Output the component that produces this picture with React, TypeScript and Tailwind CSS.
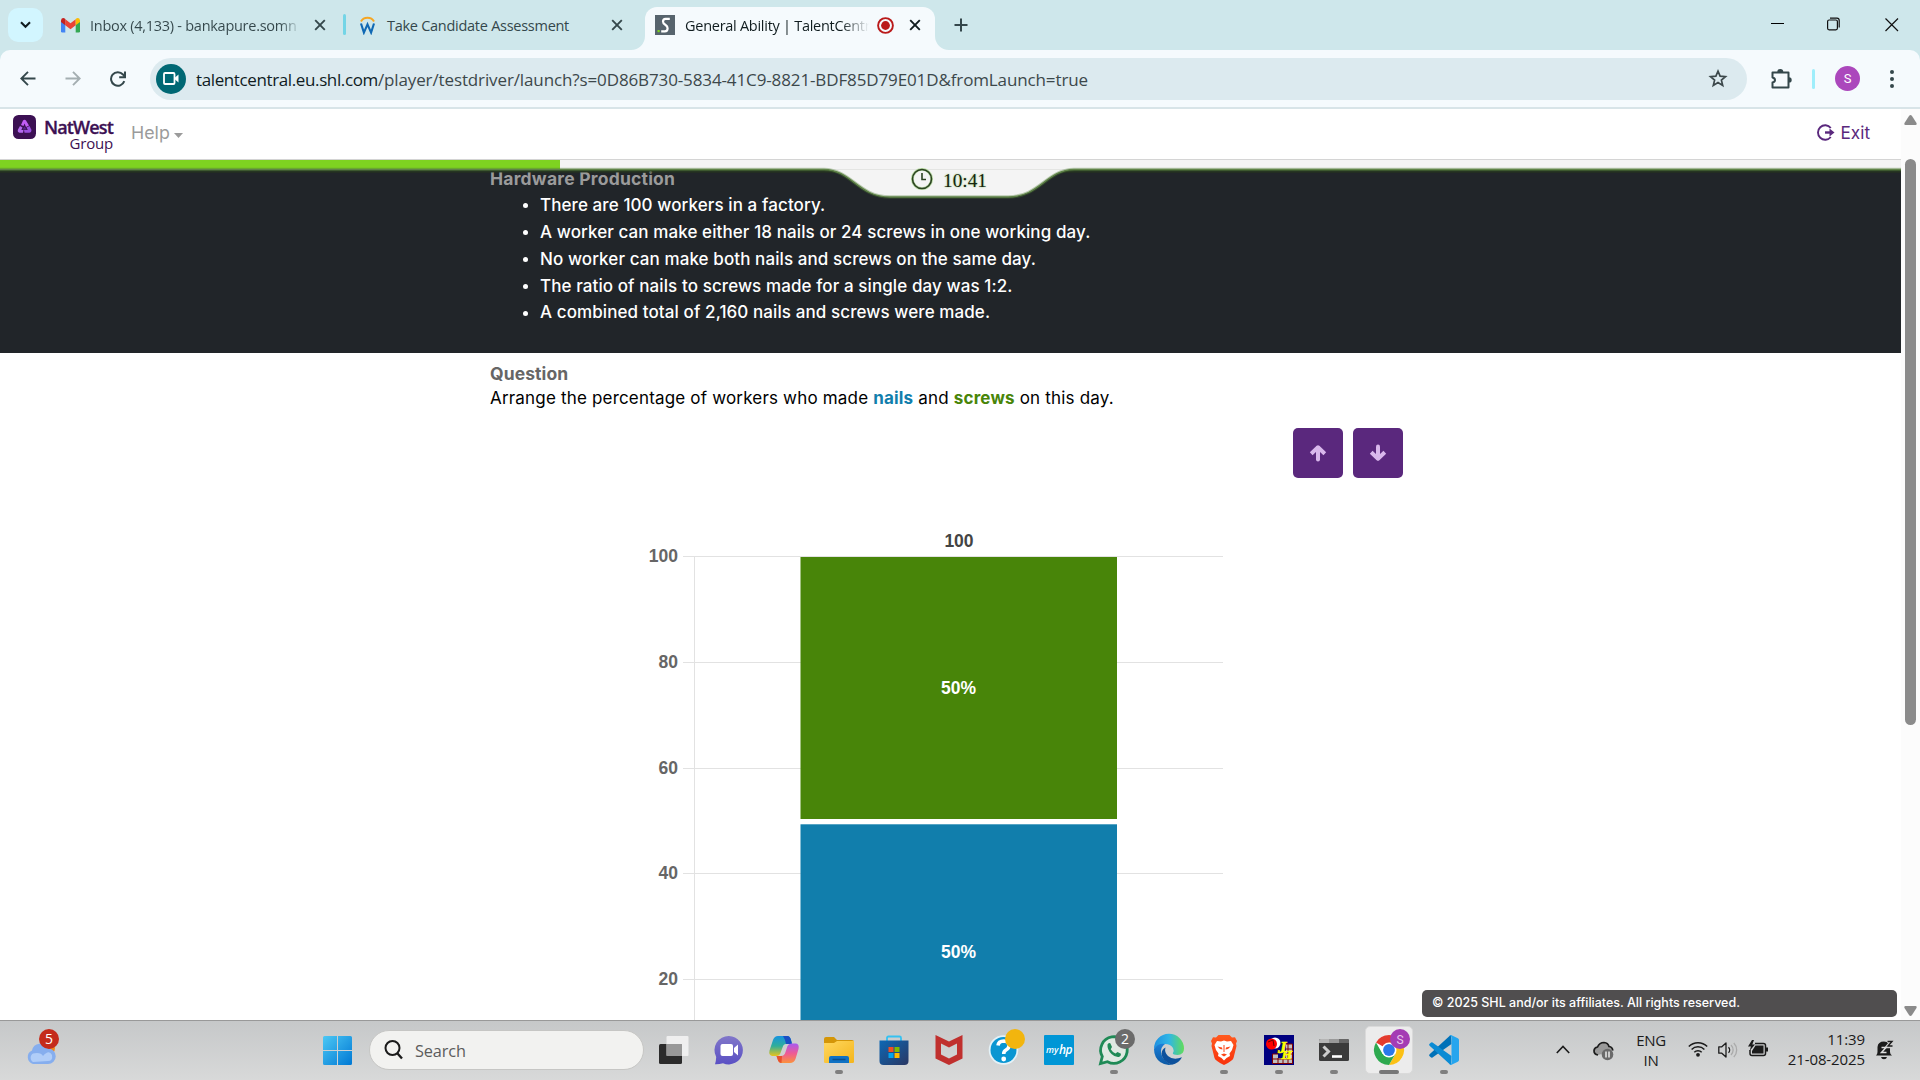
import type { ReactNode } from "react";

const FACTS = [
  "There are 100 workers in a factory.",
  "A worker can make either 18 nails or 24 screws in one working day.",
  "No worker can make both nails and screws on the same day.",
  "The ratio of nails to screws made for a single day was 1:2.",
  "A combined total of 2,160 nails and screws were made.",
];

const CloseX = ({ color = "#34474b" }: { color?: string }) => (
  <svg width="12" height="12" viewBox="0 0 12 12" stroke={color} strokeWidth="1.9">
    <path d="M1.2 1.2 10.8 10.8M10.8 1.2 1.2 10.8" />
  </svg>
);

function Gmail() {
  return (
    <svg width="19" height="15" viewBox="0 0 19 15">
      <path d="M0 2.5V13.3Q0 14.6 1.3 14.6H4.3V6.6L2 3Z" fill="#4285f4" />
      <path d="M19 2.5V13.3Q19 14.6 17.7 14.6H14.7V6.6L17 3Z" fill="#34a853" />
      <path d="M4.3 1.2 9.5 5.2 14.7 1.2V7.3L9.5 11.2 4.3 7.3Z" fill="#ea4335" />
      <path d="M0 2.2Q.4 0 2.2 0 3.3 0 4.3 1V7.3L0 4.1Z" fill="#c5221f" />
      <path d="M19 2.2Q18.600 0 16.800 0 15.700 0 14.700 1V7.300L19 4.100Z" fill="#fbbc04" />
    </svg>
  );
}

function Tabs() {
  return (
    <div className="flex h-[50px] bg-[#cee7eb] font-['Open_Sans',sans-serif] text-[14.5px] tracking-[-0.27px] text-[#34474b]">
      <div className="mt-2 ml-2 flex h-[34px] w-[35px] items-center justify-center rounded-[10px] bg-[#d2f6ff]">
        <svg width="11" height="8" viewBox="0 0 11 8" fill="none" stroke="#101c1f" strokeWidth="2.1"><path d="M1 1.300 5.500 5.800 10 1.300" /></svg>
      </div>
      <div className="flex w-[300px] items-center pl-[18px]">
        <Gmail />
        <span className="mt-[2px] ml-[10px] w-[211px] overflow-hidden whitespace-nowrap bg-linear-to-r from-[#34474b] from-90% to-transparent bg-clip-text text-transparent">Inbox (4,133) - bankapure.somn</span>
        <span className="ml-[13px]"><CloseX /></span>
      </div>
      <div className="mt-[14px] h-[21px] w-[3px] rounded bg-[#74d5e6]" />
      <div className="flex w-[299px] items-center pl-[13px]">
        <svg width="17" height="20" viewBox="0 0 17 20" fill="none">
          <path d="M2 6.500A7.200 6.500 0 0 1 15 6.500" stroke="#f6a623" strokeWidth="2" />
          <path d="M2 8.500 4.900 17.600 8.500 9.400 12.100 17.600 15 8.500" stroke="#1069b4" strokeWidth="2.100" />
        </svg>
        <span className="mt-[2px] ml-[11px] w-[224px] whitespace-nowrap">Take Candidate Assessment</span>
        <CloseX />
      </div>
      <div className="relative mt-[7px] flex w-[290px] items-center rounded-t-[12px] bg-[#f5fafd] pb-[7px] pl-[10px] text-[#101c1f]">
        <svg className="absolute bottom-0 -left-[14px]" width="14" height="14"><path d="M14 0V14H0A14 14 0 0 0 14 0Z" fill="#f5fafd" /></svg>
        <svg className="absolute bottom-0 -right-[14px]" width="14" height="14"><path d="M0 0V14H14A14 14 0 0 1 0 0Z" fill="#f5fafd" /></svg>
        <svg width="20" height="20" viewBox="0 0 20 20">
          <rect width="20" height="20" fill="#57646d" />
          <path d="M14.800 3.800H10.500Q8 3.800 8 6.400 8 8.400 10.300 9.800 12.600 11.200 12.600 13.200 12.600 16.300 9.800 16.300H6.200" fill="none" stroke="#fff" strokeWidth="2.200" />
          <rect x="2.500" y="15" width="2.200" height="2.200" fill="#7ed321" />
        </svg>
        <span className="mt-[2px] ml-[10px] w-[184px] overflow-hidden whitespace-nowrap bg-linear-to-r from-[#101c1f] from-85% to-transparent bg-clip-text text-transparent">General Ability | TalentCentr</span>
        <svg className="ml-[8px]" width="17" height="17" viewBox="0 0 17 17"><circle cx="8.500" cy="8.500" r="7.400" fill="none" stroke="#ba1a1a" strokeWidth="1.900" /><circle cx="8.500" cy="8.500" r="4.400" fill="#ba1a1a" /></svg>
        <span className="ml-[15px]"><CloseX color="#101c1f" /></span>
      </div>
      <svg className="mt-[18px] ml-[19px]" width="14" height="14" stroke="#34474b" strokeWidth="2"><path d="M7 .500V13.500M.500 7H13.500" /></svg>
      <div className="ml-auto flex pt-[17px] pr-[21px]">
        <svg width="13" height="14" stroke="#000" strokeWidth="1"><path d="M0 6.500H13" /></svg>
        <svg className="ml-[43px]" width="13" height="14" fill="none" stroke="#111" strokeWidth="1.200"><rect x=".600" y="3" width="9.800" height="9.800" rx="1.500" /><path d="M3 1.200H10Q12.200 1.200 12.200 3.500V10.500" /></svg>
        <svg className="ml-[45px]" width="14" height="15" stroke="#111" strokeWidth="1.200"><path d="M.500 1.500 13 14M13 1.500 .500 14" /></svg>
      </div>
    </div>
  );
}

function Toolbar() {
  return (
    <div className="bg-[#cee7eb]">
      <div className="flex h-[59px] items-center rounded-t-[10px] border-b-2 border-[#d8e4e8] bg-[#f5fafd] pl-5">
        <svg width="16" height="15" viewBox="0 0 16 15" fill="none" stroke="#34474b" strokeWidth="1.900"><path d="M15.500 7.500H1.500M8 .800 1.300 7.500 8 14.200" /></svg>
        <svg className="ml-[29px]" width="16" height="15" viewBox="0 0 16 15" fill="none" stroke="#a4aeb1" strokeWidth="1.900"><path d="M.500 7.500H14.500M8 .800 14.700 7.500 8 14.200" /></svg>
        <svg className="ml-[29px]" width="16" height="16" viewBox="0 0 16 16" fill="none" stroke="#34474b" strokeWidth="2"><path d="M14.300 10.200A6.800 6.800 0 1 1 13 3.500L14.800 5.800" /><path d="M15 .500V6.300H9.200" /></svg>
        <div className="ml-[24px] flex h-[42px] w-[1597px] items-center rounded-full bg-[#dceaef] pl-[6px]">
          <div className="flex size-[30px] items-center justify-center rounded-full bg-[#006874]">
            <svg width="16" height="13" viewBox="0 0 16 13"><rect x="1" y="1" width="10.500" height="11" rx="1" fill="none" stroke="#fff" strokeWidth="1.800" /><path d="M12 5.500 15.500 2.500V10.500L12 7.500Z" fill="#fff" /></svg>
          </div>
          <p className="mt-[2px] ml-[10px] whitespace-nowrap font-['Open_Sans',sans-serif] text-[17px] text-[#3c484b]">
            <span className="tracking-[-0.38px] text-[#101c1f]">talentcentral.eu.shl.com</span>
            <span className="tracking-[-0.12px]">/player/testdriver/launch?s=0D86B730-5834-41C9-8821-BDF85D79E01D&amp;fromLaunch=true</span>
          </p>
          <svg className="mr-[19px] ml-auto" width="20" height="19" viewBox="0 0 20 19" fill="none" stroke="#3c484b" strokeWidth="1.700"><path d="M10 2.200 12.100 7.100 17.500 7.600 13.400 11.100 14.700 16.400 10 13.600 5.300 16.400 6.600 11.100 2.500 7.600 7.900 7.100Z" /></svg>
        </div>
        <svg className="ml-[24px]" width="21" height="20" viewBox="0 0 21 20"><path d="M1.500 3.500H17.500V18.500H1.500V13.500Q4 12.800 4 11 4 9.200 1.500 8.500Z" fill="none" stroke="#34474b" strokeWidth="2" strokeLinejoin="round" /><path d="M6.300 3A3 3 0 0 1 12.300 3ZM18 8.200A2.700 2.700 0 0 1 18 13.600Z" fill="#34474b" /></svg>
        <div className="ml-[20px] h-5 w-[3px] rounded bg-[#9feefb]" />
        <div className="ml-[20px] flex size-[25px] items-center justify-center rounded-full bg-[#ab47bc] font-[Roboto] text-[13px] text-white">S</div>
        <svg className="ml-[30px]" width="4" height="18" fill="#34474b"><circle cx="2" cy="2" r="2" /><circle cx="2" cy="9" r="2" /><circle cx="2" cy="16" r="2" /></svg>
      </div>
    </div>
  );
}

function SiteHeader() {
  return (
    <div className="flex h-[50px] shrink-0 bg-white pl-[13px]">
      <svg className="mt-[6px]" width="23" height="24" viewBox="0 0 23 24">
        <rect width="23" height="24" rx="5.500" fill="#3c1053" />
        <g strokeLinejoin="round" strokeWidth="1">
          <path d="M8 10 10 5.500Q11.500 4 13 5.500L16 10.500 13 12 11.500 8.500 10.500 11Z" fill="#c15cf5" />
          <path d="M16.500 11 18.500 15Q18.500 17.500 16.500 17.800H11.500L11 15H14.800L13.500 12.500Z" fill="#9a4fe0" />
          <path d="M10 17.800H6.500Q4 17 5 14.500L7 11 9.500 12.500 8.300 15H10.500Z" fill="#b56af0" />
          <path d="M11.500 11.500 13.300 14.500H9.700Z" fill="#5a2390" />
        </g>
      </svg>
      <div className="ml-[7px] flex w-[70px] flex-col items-end whitespace-nowrap font-['Open_Sans',sans-serif] text-[#3c1053]">
        <span className="mt-[8px] text-[18px] leading-[20px] font-semibold tracking-[-0.85px] [-webkit-text-stroke:0.3px_#3c1053]">NatWest</span>
        <span className="text-[15px] leading-[13px] font-medium tracking-[-0.2px]">Group</span>
      </div>
      <div className="ml-[18px] flex items-center pb-[2px] font-['Inter',sans-serif] text-[17.8px] text-[#9b9b9b]">
        Help
        <svg className="mt-1 ml-[4px]" width="9" height="5"><path d="M0 0H9L4.500 5Z" fill="#9b9b9b" /></svg>
      </div>
      <div className="mr-[31px] ml-auto flex items-center pb-[2px] font-['Inter',sans-serif] text-[17.2px] text-[#5a287d]">
        <svg className="mr-[6px] -mt-[1px]" width="18" height="17" viewBox="0 0 18 17" fill="none" stroke="#5a287d" strokeWidth="1.900"><path d="M13.800 4A7.200 7.200 0 1 0 13.800 13" /><path d="M8 8.500H14" strokeWidth="2.400" /><path d="M12.500 4.500 17.500 8.500 12.500 12.500Z" fill="#5a287d" stroke="none" /></svg>
        Exit
      </div>
    </div>
  );
}

function TimerBar() {
  return (
    <div className="relative h-[11px] shrink-0 border-t border-[#d4d4d4] bg-[#f4f4f4]">
      <div className="h-[10px] w-[560px] bg-[#7ed321]" />
      <svg className="absolute top-[7px] left-0" width="1901" height="36" viewBox="0 0 1901 36" fill="none">
        <path d="M0 4.200H1901" stroke="#26391c" strokeWidth="3" opacity=".6" />
        <path d="M824 2.500C852 3 858 30 890 30H1008C1040 30 1046 3 1074 2.500Z" fill="#f4f4f4" />
        <path d="M0 2.500H824C852 3 858 30 890 30H1008C1040 30 1046 3 1074 2.500H1901" stroke="#4d7a34" strokeWidth="3.500" opacity=".35" />
        <path d="M0 2.500H824C852 3 858 30 890 30H1008C1040 30 1046 3 1074 2.500H1901" stroke="#5f8348" strokeWidth="1.300" />
      </svg>
      <div className="absolute top-[6px] left-[911px] flex items-center">
        <svg width="22" height="22" viewBox="0 0 22 22" fill="none" stroke="#2c4322"><circle cx="11" cy="11" r="9.600" strokeWidth="2.800" stroke="#b9dba4" /><circle cx="11" cy="11" r="9.500" strokeWidth="1.600" /><path d="M11 5V11.500H15" strokeWidth="1.600" /></svg>
        <span className="mt-[4px] ml-[10px] font-['Liberation_Serif',serif] text-[19.300px] leading-[22px] text-[#16240f] [text-shadow:0_0_2px_#8cc46a]">10:41</span>
      </div>
    </div>
  );
}

function Chart() {
  const ticks: [number, number][] = [[100, 46.5], [80, 152.5], [60, 258.5], [40, 363.5], [20, 469.5]];
  return (
    <svg className="ml-[640px] block" width="600" height="510" viewBox="0 0 600 510" fontFamily="Liberation Sans, sans-serif" fontWeight="700" fontSize="17.5">
      <g stroke="#e2e2e2">
        {ticks.map(([v, y]) => <path key={v} d={`M43 ${y}H583`} />)}
        <path d="M54.500 46.500V510" />
      </g>
      {ticks.map(([v, y]) => <text key={v} x="38" y={y + 5} textAnchor="end" fill="#666">{v}</text>)}
      <rect x="160.500" y="47" width="316.500" height="262" fill="#488509" />
      <rect x="160.500" y="314.300" width="316.500" height="200" fill="#117eac" />
      <text x="319" y="37" textAnchor="middle" fill="#444">100</text>
      <text x="318.500" y="184" textAnchor="middle" fill="#fff">50%</text>
      <text x="318.500" y="448" textAnchor="middle" fill="#fff">50%</text>
    </svg>
  );
}

const MoveButton = ({ down = false }: { down?: boolean }) => (
  <button className="flex size-[50px] items-center justify-center rounded-[5px] bg-[#5a287d]">
    <svg className={down ? "rotate-180" : ""} width="18" height="18" viewBox="0 0 18 18" fill="none" stroke="#d9b8ec" strokeWidth="4"><path d="M9 15.500V4" strokeLinecap="round" /><path d="M2.200 9.700 9 3.300 15.800 9.700" strokeLinejoin="round" /></svg>
  </button>
);

function Page() {
  return (
    <div className="flex h-[911px] bg-white">
      <div className="flex w-[1901px] flex-col">
        <SiteHeader />
        <TimerBar />
        <div className="h-[183px] shrink-0 bg-[#212529] pl-[490px] font-['Inter',sans-serif] text-[17px]">
          <h2 className="text-[17.5px] leading-[18px] font-bold tracking-[0.22px] text-[#9b9b9b]">Hardware Production</h2>
          <ul className="mt-[4.500px] font-medium tracking-[0.09px] text-white">
            {FACTS.map((f) => (
              <li key={f} className="flex h-[26.800px] items-center pl-[33px]">
                <span className="mr-[12px] size-[5px] rounded-full bg-white" />
                {f}
              </li>
            ))}
          </ul>
        </div>
        <div className="flex h-[75px] shrink-0 flex-col pl-[490px] font-['Inter',sans-serif] text-[17px] text-black">
          <h2 className="mt-[9px] text-[17.5px] leading-[24px] font-bold tracking-[0.1px] text-[#666]">Question</h2>
          <p className="leading-[24px] tracking-[0.18px]">
            Arrange the percentage of workers who made <b className="text-[#117eac]">nails</b> and <b className="text-[#488509]">screws</b> on this day.
          </p>
        </div>
        <div className="flex h-[82px] shrink-0 gap-[10px] pl-[1293px]">
          <MoveButton />
          <MoveButton down />
        </div>
        <Chart />
      </div>
      <div className="flex w-[19px] flex-col items-center bg-[#fcfcfc] pt-[6px] pb-[4px]">
        <svg width="13" height="10"><path d="M6.500 0Q7.300 0 8 1L12.500 8Q13.200 10 11.500 10H1.500Q-.200 10 .500 8L5 1Q5.700 0 6.500 0Z" fill="#8b8b8b" /></svg>
        <div className="mt-[34px] h-[566px] w-[11px] rounded-full bg-[#8b8b8b]" />
        <svg className="mt-auto" width="13" height="10"><path d="M6.500 10Q7.300 10 8 9L12.500 2Q13.200 0 11.500 0H1.500Q-.200 0 .500 2L5 9Q5.700 10 6.500 10Z" fill="#8b8b8b" /></svg>
      </div>
    </div>
  );
}

function TaskIcon({ children, dot = false, active = false }: { children: ReactNode; dot?: boolean; active?: boolean }) {
  return (
    <div className="flex w-[55px] flex-col items-center">
      <div className={active ? "mt-[5px] flex h-[48px] w-[48px] flex-col items-center rounded-[5px] border border-[#dadada] bg-[#ececec] pt-[8px]" : "mt-[5px] flex h-[48px] w-[48px] flex-col items-center pt-[9px]"}>
        <svg className="shrink-0 overflow-visible" width="30" height="30" viewBox="0 0 30 30">{children}</svg>
        {active ? <div className="mt-[5px] h-1 w-5 shrink-0 rounded-full bg-[#777]" /> : dot && <div className="mt-[5px] h-1 w-2 shrink-0 rounded-full bg-[#7f7f7f]" />}
      </div>
    </div>
  );
}

function Gradients() {
  return (
    <defs>
      <linearGradient id="win" x1="0" y1="0" x2="1" y2="1"><stop offset="0" stopColor="#4cc8f4" /><stop offset="1" stopColor="#0078d4" /></linearGradient>
      <linearGradient id="fold" x1="0" y1="0" x2="1" y2="1"><stop offset="0" stopColor="#ffd75e" /><stop offset="1" stopColor="#f4b51c" /></linearGradient>
      <linearGradient id="store" x1="0" y1="0" x2="1" y2="1"><stop offset="0" stopColor="#0d68b5" /><stop offset="1" stopColor="#2a3763" /></linearGradient>
      <linearGradient id="chat" x1="0" y1="0" x2="0" y2="1"><stop offset="0" stopColor="#8177c9" /><stop offset="1" stopColor="#5a50c4" /></linearGradient>
      <linearGradient id="copA" x1="0" y1="0" x2="0" y2="1"><stop offset="0" stopColor="#1793e0" /><stop offset=".5" stopColor="#2fae9a" /><stop offset="1" stopColor="#e8c41c" /></linearGradient>
      <linearGradient id="copB" x1="0" y1="0" x2="0" y2="1"><stop offset="0" stopColor="#a85af0" /><stop offset=".5" stopColor="#ee5a96" /><stop offset="1" stopColor="#fb923c" /></linearGradient>
      <linearGradient id="edgeA" x1="0" y1="0" x2="1" y2="0"><stop offset="0" stopColor="#1e8fe0" /><stop offset=".5" stopColor="#2fb6e6" /><stop offset="1" stopColor="#62dc5a" /></linearGradient>
      <linearGradient id="edgeB" x1="0" y1="0" x2="0" y2="1"><stop offset="0" stopColor="#1b7fd8" /><stop offset="1" stopColor="#0c59a4" /></linearGradient>
      <linearGradient id="brave" x1="0" y1="0" x2="0" y2="1"><stop offset="0" stopColor="#ff5a1f" /><stop offset="1" stopColor="#f8320c" /></linearGradient>
    </defs>
  );
}

function Taskbar() {
  return (
    <div className="flex h-[60px] border-t border-[#999] bg-linear-to-b from-[#c6c8c9] to-[#d8d9d9] font-['Open_Sans',sans-serif] text-[#1b1b1b]">
      <svg className="mt-[8px] ml-[25px]" width="36" height="38" viewBox="0 0 36 38">
        <circle cx="23" cy="19" r="7" fill="#f08a1c" />
        <path d="M8 35A7.200 7.200 0 0 1 7 21.500 8.500 8.500 0 0 1 23 19.500 7.500 7.500 0 0 1 23 35Z" fill="#86aeee" />
        <path d="M8 33A5 5 0 0 1 8 24.500Q16 23 18 27 24 20 27 26 28 32 23 32Z" fill="#b0cdf8" />
        <circle cx="24" cy="10" r="10" fill="#c42b1c" />
        <text x="24" y="15" fontSize="14" fill="#fff" textAnchor="middle">5</text>
      </svg>
      <svg className="mt-[15px] ml-[262px] shrink-0" width="29" height="29" viewBox="0 0 29 29" fill="url(#win)"><Gradients /><path d="M1.500 0H14V14H0V1.500Q0 0 1.500 0ZM15 0H27.500Q29 0 29 1.500V14H15ZM0 15H14V29H1.500Q0 29 0 27.500ZM15 15H29V27.500Q29 29 27.500 29H15Z" /></svg>
      <div className="mt-[9px] ml-[17px] flex h-[40px] w-[275px] shrink-0 items-center rounded-full border border-[#c6c6c4] bg-[#f2f2f0] pl-[14px] text-[16.300px] tracking-[-0.1px] text-[#5c5c5c]">
        <svg className="mr-[12px]" width="19" height="20" viewBox="0 0 19 20" fill="none" stroke="#1b1b1b" strokeWidth="2"><circle cx="8.500" cy="8" r="7" /><path d="M13.300 13.300 18 18.500" strokeWidth="2.400" /></svg>
        <span className="mt-[2px]">Search</span>
      </div>
      <div className="ml-[2px] flex shrink-0">
        <TaskIcon>
          <rect x="0" y="9" width="23" height="20" rx="1.500" fill="#2b2b2b" /><rect x="7.500" y="1" width="22" height="20" rx="1" fill="#f4f4f4" opacity=".88" /><path d="M7.500 9H23V21H7.500Z" fill="#8c8c8c" opacity=".85" />
        </TaskIcon>
        <TaskIcon>
          <path d="M15 1A14.200 14.200 0 1 1 9 28.200Q5 29.500 1 29.300 2 26.500 2.200 22A14.200 14.200 0 0 1 15 1Z" fill="url(#chat)" />
          <rect x="6.500" y="9" width="12.500" height="12" rx="2" fill="#fff" /><path d="M20 13 24 9.500V20.500L20 17Z" fill="#fff" />
        </TaskIcon>
        <TaskIcon>
          <path d="M9 1H18.500Q21 1 22 5L23 9H17Q14.500 9 13.700 12L11.500 18Q10.500 21 7.500 21H3Q-.500 20 .500 15.500L4 5Q5.500 1 9 1Z" fill="url(#copA)" />
          <path d="M14 1H18.500Q21 1 22 5L23 9H17Q16 4 14 1Z" fill="#1a4fc4" />
          <path d="M21 28H12.500Q9.500 28 8.500 24L7.500 21H12Q15.500 21 16.500 17L18.500 11Q19.500 8.500 22.500 8.500H27Q30.500 9 29.500 14L26.500 24Q25 28 21 28Z" fill="url(#copB)" />
          <path d="M7.500 21H13L12.500 28Q9.500 28 8.500 24Z" fill="#e8522c" />
        </TaskIcon>
        <TaskIcon dot>
          <path d="M0 4Q0 2 2 2H10L13 5H28Q30 5 30 7V12H0Z" fill="#d49608" /><path d="M0 8 10 8 13 6H30V27Q30 28 28.500 28H1.500Q0 28 0 27Z" fill="url(#fold)" />
          <path d="M5 28V23Q5 21 7 21H23Q25 21 25 23V28Z" fill="#1072c4" /><path d="M8.500 24.500H21.500" stroke="#0b4f8c" strokeWidth="1.500" />
        </TaskIcon>
        <TaskIcon>
          <path d="M8 7V3Q8 1.500 9.500 1.500H20.500Q22 1.500 22 3V7" fill="none" stroke="#35c1f1" strokeWidth="1.800" /><path d="M.500 5.500H29.500V26Q29.500 30 25.500 30H4.500Q.500 30 .500 26Z" fill="url(#store)" />
          <path d="M9.500 12H14.500V17H9.500Z" fill="#f25022" /><path d="M15.500 12H20.500V17H15.500Z" fill="#7fba00" /><path d="M9.500 18H14.500V23H9.500Z" fill="#00a4ef" /><path d="M15.500 18H20.500V23H15.500Z" fill="#ffb900" />
        </TaskIcon>
        <TaskIcon>
          <path d="M1.500 0 15 6.500 28.500 0V23.500L15 30 1.500 23.500ZM7 8.500V19.500L15 23.500 23 19.500V8.500L15 12.500Z" fill="#c0302e" fillRule="evenodd" />
        </TaskIcon>
        <TaskIcon>
          <circle cx="14.500" cy="15" r="14.800" fill="#e4f2f8" /><circle cx="14.500" cy="15" r="13" fill="#0a96d2" />
          <path d="M9 10.500Q9.500 6 14.800 6 20 6.300 20 10.800 20 13.300 17 15 14.700 16.300 14.700 19" fill="none" stroke="#fff" strokeWidth="3.600" /><circle cx="14.700" cy="24" r="2.400" fill="#fff" /><circle cx="26" cy="4" r="10" fill="#f2b50e" />
        </TaskIcon>
        <TaskIcon>
          <rect width="30" height="30" rx="1" fill="#0096d6" /><text x="2" y="18" fontSize="9" fontWeight="600" fontStyle="italic" fill="#fff">my</text><text x="15" y="19" fontSize="12" fontWeight="600" fontStyle="italic" fill="#fff" letterSpacing="-.5">hp</text>
        </TaskIcon>
        <TaskIcon dot>
          <path d="M1.500 28.500 3.300 21.500A13.300 13.300 0 1 1 8.500 26.700Z" fill="#dfe9e2" stroke="#1f8a56" strokeWidth="2.800" />
          <path d="M8.500 9.500Q10 7.500 11.300 8.300L13 12 11.700 14.200Q13.500 17.200 16.500 18.500L18.500 17 22 18.800Q22.200 21 20 22 16.500 22.700 12.500 19 8 14.500 8.500 9.500Z" fill="#1f8a56" />
          <circle cx="26" cy="4" r="10" fill="#6b6b6b" /><text x="26" y="9" fontSize="14" fill="#fff" textAnchor="middle">2</text>
        </TaskIcon>
        <TaskIcon>
          <path d="M0 14A15 15 0 0 1 30 13.500Q30 20 23.500 20 19 20 18.800 18.300 20.500 16 19 13 16.500 9 11 9 5 9 0 14Z" fill="url(#edgeA)" />
          <path d="M0 14Q4 8 11 9 6.500 12 7 18 8.500 26 18 29.600 12 31 6.500 27.300 0 22.500 0 14Z" fill="url(#edgeB)" />
          <path d="M11.500 12.500Q10 17 14 21 19 25.500 28 22.300 24.500 28.800 18 29.700 8 26.500 7.500 18.500 8 14 11.500 12.500Z" fill="#0d519c" />
        </TaskIcon>
        <TaskIcon dot>
          <path d="M9.500 0H20.500L23 2.500 26 2.300 28 6 27 8.500 27.500 11 24.500 23Q24 25.500 15 30 6 25.500 5.500 23L2.500 11 3 8.500 2 6 4 2.300 7 2.500Z" fill="url(#brave)" />
          <path d="M8 6 12 6.500 15 5.500 18 6.500 22 6 24.500 10 23 15 20.500 18.500 21 21 17.500 23 15 25.500 12.500 23 9 21 9.500 18.500 7 15 5.500 10Z" fill="#fff" />
          <path d="M8.500 11.500 13 12.500 13.500 14.500 11 14ZM21.500 11.500 17 12.500 16.500 14.500 19 14ZM12 19.500 15 18.500 18 19.500 15 21.500Z" fill="#fb4618" /><path d="M15 10V17" stroke="#fb4618" />
        </TaskIcon>
        <TaskIcon dot>
          <rect width="30" height="30" fill="#000080" /><path d="M8.500 28.500V19H14V9H28.500V28.500Z" fill="#c0c0c0" stroke="#800000" /><path d="M14 9H22V23H14Z" fill="#000080" />
          <path d="M8.500 24H28.500M22 19H28.500M22 14H28.500M14 23V29M19 23V29M24 9V29" stroke="#800000" /><circle cx="11" cy="8" r="5.500" fill="#fff" /><circle cx="7.500" cy="9" r="5.500" fill="#f00" /><path d="M4 7 9 5 10 11" fill="none" stroke="#600" />
          <text x="14" y="18" fontSize="17" fontWeight="700" fontStyle="italic" fontFamily="Liberation Serif" fill="#ff0" stroke="#ff0" strokeWidth=".6">J</text><text x="17.500" y="24" fontSize="13.500" fontWeight="700" fontStyle="italic" fontFamily="Liberation Serif" fill="#ff0" stroke="#ff0" strokeWidth=".6">H</text>
        </TaskIcon>
        <TaskIcon dot>
          <path d="M1.500 4H28.500Q30 4 30 5.500V24.500Q30 26 28.500 26H1.500Q0 26 0 24.500V5.500Q0 4 1.500 4Z" fill="#3b3b3b" /><path d="M1.500 4H10V8H0V5.500Q0 4 1.500 4Z" fill="#b5b5b5" /><path d="M10 4H20V8H10Z" fill="#999" /><path d="M20 4H28.500Q30 4 30 5.500V8H20Z" fill="#666" />
          <path d="M4.500 11.500 9.500 16.500 4.500 21.500" fill="none" stroke="#ccc" strokeWidth="3" /><path d="M13 21.500H23" stroke="#fff" strokeWidth="2.600" />
        </TaskIcon>
        <TaskIcon active>
          <circle cx="15" cy="15" r="15" fill="#fff" /><path d="M15 15 2 7.500A15 15 0 0 1 28 7.500Z" fill="#e33b2e" /><path d="M15 7.500H28A15 15 0 0 1 15 30L21.500 19Z" fill="#fbc116" /><path d="M2 7.500A15 15 0 0 0 15 30L21.500 18.800 8.500 18.800Z" fill="#2da94f" /><circle cx="15" cy="15" r="7.500" fill="#fff" /><circle cx="15" cy="15" r="5.900" fill="#2a78ea" />
          <circle cx="26" cy="4" r="10" fill="#a43cb4" /><text x="26" y="8.500" fontSize="12" fontFamily="Roboto" fill="#e8c8ee" textAnchor="middle">S</text>
        </TaskIcon>
        <TaskIcon dot>
          <path d="M22 0 22.500 9 3.500 22.500Q2.500 23 1.800 22.300L.400 21Q-.300 20.200 .600 19.300L20.500 1Z" fill="#0071b8" />
          <path d="M22 30 22.500 21 3.500 7.500Q2.500 7 1.800 7.700L.400 9Q-.300 9.800 .600 10.700L20.500 29Z" fill="#0b8bd4" />
          <path d="M22 0 28.800 3.200Q30 3.800 30 5V25Q30 26.200 28.800 26.800L22 30Q20.800 30 20.500 29 22.500 29.500 22.500 27.500V2.500Q22.500 .500 20.500 1 20.800 0 22 0Z" fill="#25a5ee" />
        </TaskIcon>
      </div>
      <svg className="mt-[24px] ml-[85px] shrink-0" width="14" height="9" fill="none" stroke="#1b1b1b" strokeWidth="1.600"><path d="M.800 8 7 1.500 13.200 8" /></svg>
      <svg className="mt-[20px] ml-[23px] shrink-0" width="21" height="20" viewBox="0 0 21 20"><path d="M5 14Q1 13.500 1 9.800 1.200 6.500 4.500 6 6.500 1.500 11 1.500 15 1.800 16 5.500 19.500 6 19.800 9.500" fill="#9a9a9a" stroke="#1b1b1b" strokeWidth="1.700" /><circle cx="14.500" cy="13.500" r="5.800" fill="#6a6a6a" /><path d="M13 10.500V16.500M16 10.500V16.500" stroke="#fff" strokeWidth="1.300" /></svg>
      <div className="mt-[9px] ml-[17px] flex w-[40px] shrink-0 flex-col items-center text-[15px] leading-[20px] tracking-[-0.3px]"><span>ENG</span><span>IN</span></div>
      <svg className="mt-[20px] ml-[17px] shrink-0" width="20" height="16" viewBox="0 0 20 16" fill="none" stroke="#1b1b1b" strokeWidth="1.500"><path d="M.800 5.500A13 13 0 0 1 19.200 5.500M3.600 8.500A9 9 0 0 1 16.400 8.500M6.300 11.300A5.200 5.200 0 0 1 13.700 11.300" /><circle cx="10" cy="13.800" r="1.900" fill="#1b1b1b" stroke="none" /></svg>
      <svg className="mt-[20px] ml-[10px] shrink-0" width="20" height="18" viewBox="0 0 20 18" fill="none" stroke="#1b1b1b" strokeWidth="1.300"><path d="M.800 5.800H3.800L8 2V16L3.800 12.200H.800Z" strokeLinejoin="round" /><path d="M10.500 6.200A4 4 0 0 1 10.500 11.800" /><path d="M13 4A7 7 0 0 1 13 14M15.800 2A10 10 0 0 1 15.800 16" stroke="#aaa" /></svg>
      <svg className="mt-[19px] ml-[10px] shrink-0" width="21" height="17" viewBox="0 0 21 17"><path d="M7 3.500H15.500Q17.500 3.500 17.500 5.500V13.500Q17.500 15.500 15.500 15.500H4Q2 15.500 2 13.500V10" fill="none" stroke="#1b1b1b" strokeWidth="1.500" /><path d="M7.500 5.500H15.500V13.500H4V11Z" fill="#1b1b1b" /><path d="M18 7.500H20V11.500H18ZM4 0 0 6.500H3L1.500 11 7 4.500H4.300L6 0Z" fill="#1b1b1b" /></svg>
      <div className="mt-[8px] ml-auto flex w-[90px] shrink-0 flex-col items-end text-[15px] leading-[20px] tracking-[-0.1px]"><span>11:39</span><span>21-08-2025</span></div>
      <svg className="mt-[19px] mr-[26px] ml-[10px] shrink-0" width="19" height="20" viewBox="0 0 19 20"><path d="M1 15.500Q2.500 14 2.500 12V7Q3 1.500 9 1.500 15 2 15 7V12Q15 14 17 15.500ZM6 17H12Q11.500 19.300 9 19.300 6.500 19.300 6 17Z" fill="#1b1b1b" /><path d="M12 1H17L12.500 6.500H17.500" fill="none" stroke="#d0d0d0" strokeWidth="3.500" /><path d="M12.500 1.500H17L13 6H17.500" fill="none" stroke="#1b1b1b" strokeWidth="1.400" /><path d="M6.500 7.500H11L6.500 12.500H11.500" fill="none" stroke="#ddd" strokeWidth="1.500" /></svg>
    </div>
  );
}

export default function App() {
  return (
    <div className="relative flex h-[1080px] w-[1920px] flex-col overflow-hidden">
      <Tabs />
      <Toolbar />
      <Page />
      <div className="absolute top-[990px] left-[1422px] flex h-[27px] w-[475px] items-center rounded-[5px] bg-[#504e4f] pl-[10px] font-['Inter',sans-serif] text-[12.500px] font-medium text-white">© 2025 SHL and/or its affiliates. All rights reserved.</div>
      <Taskbar />
    </div>
  );
}
